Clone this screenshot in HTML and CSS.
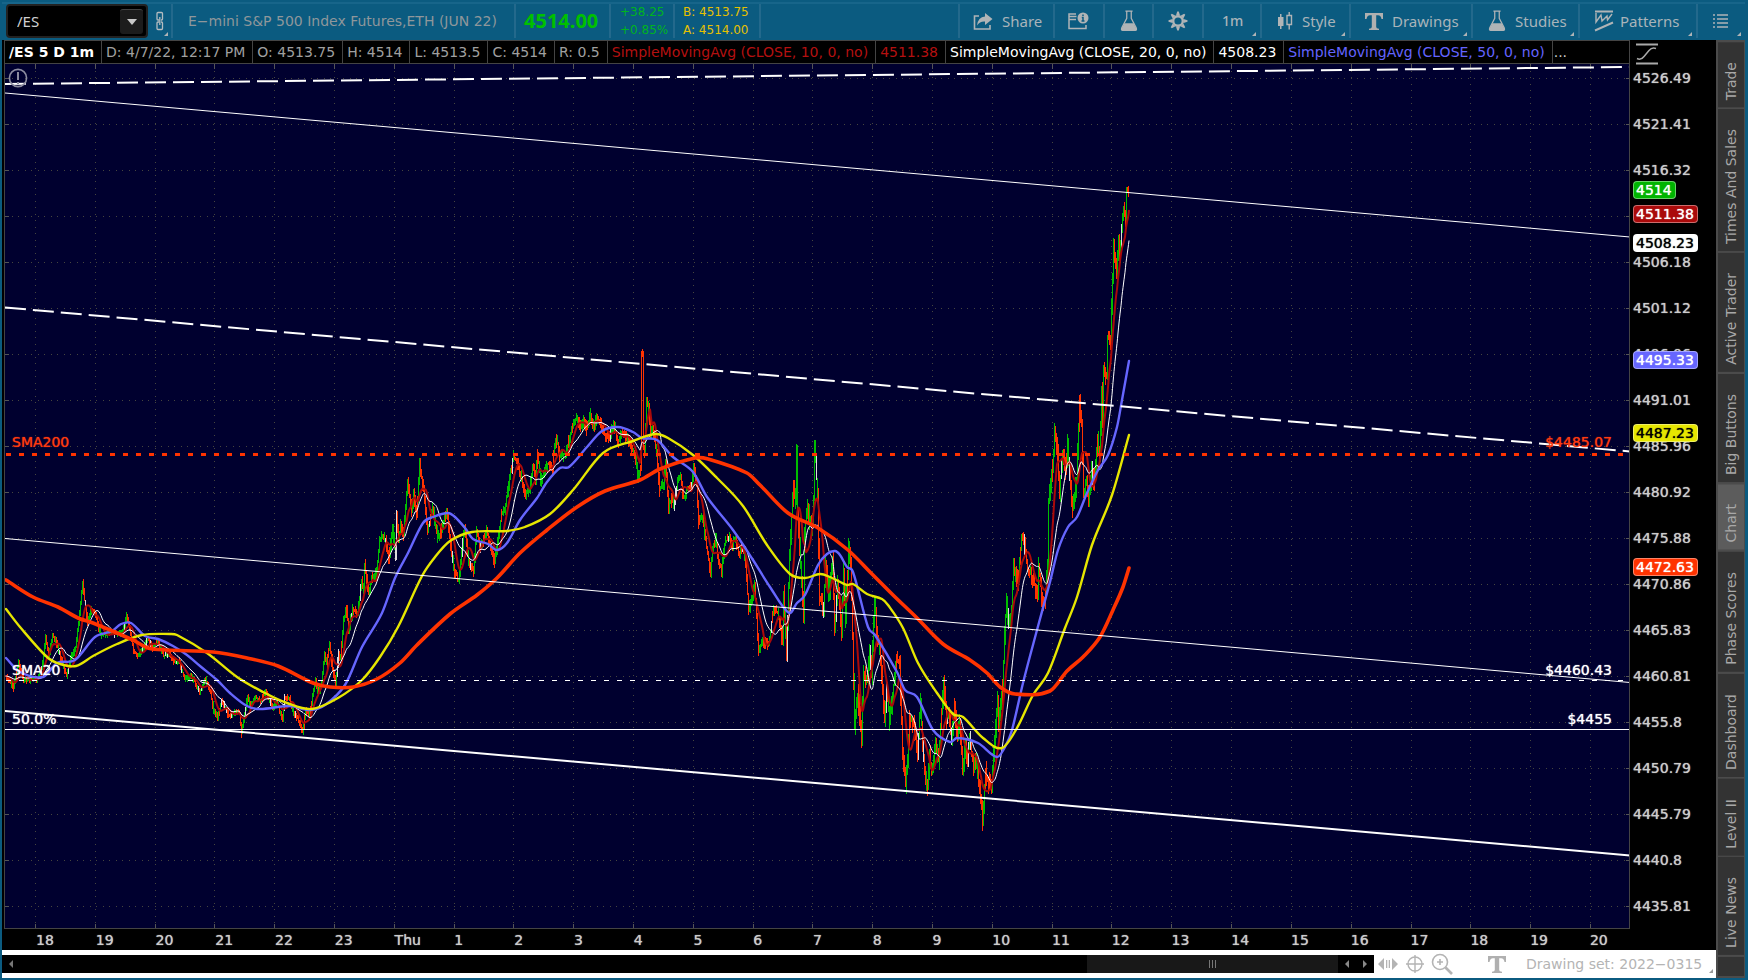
FILE: index.html
```html
<!DOCTYPE html>
<html lang="en">
<head>
<meta charset="utf-8">
<title>/ES chart</title>
<link rel="stylesheet" href="styles.css">
</head>
<body>
<header class="toolbar">
  <div class="cell symbol-cell">
    <div class="combo">
      <input class="combo-input" type="text" value="/ES" aria-label="Symbol">
      <button class="combo-btn" aria-label="Choose symbol"><svg width="12" height="8"><path d="M1 1h10L6 7z" fill="#c8c8c8"/></svg></button>
    </div>
    <button class="link-btn corner" aria-label="Link symbol"><svg width="10" height="20" viewBox="0 0 10 20" fill="none" stroke="#b4bcc0" stroke-width="1.3"><path d="M2 8V2.500q0-1 1-1h3.500q1 0 1 1V8q0 1-1 1H6M4 9H3q-1 0-1-1M2 12v5.500q0 1 1 1h3.500q1 0 1-1V12q0-1-1-1H6M4 11H3q-1 0-1 1"/><path d="M4.800 6v8"/></svg></button>
  </div>
  <div class="cell title">E−mini S&amp;P 500 Index Futures,ETH (JUN 22)</div>
  <div class="cell last">4514.00</div>
  <div class="cell pair change"><span>+38.25</span><span>+0.85%</span></div>
  <div class="cell pair quote"><span>B: 4513.75</span><span>A: 4514.00</span></div>
  <div class="spacer"></div>
  <button class="cell tool share"><svg width="20" height="19" viewBox="0 0 20 19"><path d="M6 4H1.500v13H17v-4" fill="none" stroke="#b0b4b6" stroke-width="1.600"/><path d="M12 1l7.500 6L12 13V9.500Q7 9 4 13.500 5 5 12 4.500z" fill="#b0b4b6"/></svg>Share</button>
  <button class="cell tool info" aria-label="Info"><svg width="21" height="18" viewBox="0 0 21 18"><path d="M8.500 4.500H1V16.500H18V13M1 4.500V2H8M1 7.500H8" fill="none" stroke="#b0b4b6" stroke-width="1.500"/><circle cx="15" cy="6" r="5.500" fill="#b0b4b6"/><path d="M15 2.500v1.500M13.800 5.500H15V9M13.500 9h3" stroke="#0b5b80" stroke-width="1.500" fill="none"/></svg></button>
  <button class="cell tool lab" aria-label="Lab"><svg width="18" height="22" viewBox="0 0 20 24"><use href="#flask"/></svg></button>
  <button class="cell tool gear" aria-label="Settings"><svg width="20" height="20" viewBox="-10 -10 20 20"><circle r="4.800" fill="none" stroke="#b0b4b6" stroke-width="2.400"/><g fill="#b0b4b6"><path id="tooth" d="M-2-5.500L-.8-9.500H.8L2-5.500z"/><use href="#tooth" transform="rotate(45)"/><use href="#tooth" transform="rotate(90)"/><use href="#tooth" transform="rotate(135)"/><use href="#tooth" transform="rotate(180)"/><use href="#tooth" transform="rotate(225)"/><use href="#tooth" transform="rotate(270)"/><use href="#tooth" transform="rotate(315)"/></g></svg></button>
  <button class="cell tool corner interval">1m</button>
  <button class="cell tool corner style"><svg width="16" height="20" viewBox="0 0 16 20"><path d="M1 6h5.500v9H1zM3 3h1.500v15H3z" fill="#b0b4b6"/><path d="M10 4.500h4.500v9H10zM12.200 1v3.500M12.200 13.500v5" fill="none" stroke="#b0b4b6" stroke-width="1.400"/></svg>Style</button>
  <button class="cell tool corner drawings"><svg width="18" height="19" viewBox="0 0 18 19"><use href="#tee"/></svg>Drawings</button>
  <button class="cell tool corner studies"><svg width="18" height="22" viewBox="0 0 20 24"><use href="#flask"/></svg>Studies</button>
  <button class="cell tool corner patterns"><svg width="20" height="22" viewBox="0 0 20 22" fill="none" stroke="#b0b4b6" stroke-width="1.400"><path d="M1 1.500h18" stroke-width="2"/><path d="M2 3v9l5-7 1 6 5-5 .5 4 4.500-6"/><path d="M1 20.500L19 12.500" stroke-width="2"/></svg>Patterns</button>
  <button class="cell tool corner menu" aria-label="Menu"><svg width="15" height="16" viewBox="0 0 15 16"><path d="M0 2h2M4 2h11M0 6h2M4 6h11M0 10h2M4 10h11M0 14h2M4 14h11" stroke="#b0b4b6" stroke-width="1.500"/></svg></button>
</header>

<main class="work">
  <div class="left">
    <section class="chart">
      <div class="legend">
        <b class="lg strong">/ES 5 D 1m</b><span class="lg">D: 4/7/22, 12:17 PM</span><span class="lg">O: 4513.75</span><span class="lg">H: 4514</span><span class="lg">L: 4513.5</span><span class="lg">C: 4514</span><span class="lg">R: 0.5</span><span class="lg red">SimpleMovingAvg (CLOSE, 10, 0, no)</span><span class="lg red">4511.38</span><span class="lg white">SimpleMovingAvg (CLOSE, 20, 0, no)</span><span class="lg white">4508.23</span><span class="lg blue">SimpleMovingAvg (CLOSE, 50, 0, no)</span><span class="more">...</span>
      </div>
      <div class="axis-head"><svg width="22" height="22" viewBox="0 0 22 22" fill="none" stroke="#aaa"><path d="M0 1.500h22M0 20.500h22" stroke-width="2.200"/><path d="M1 15.500q4 2 7-2l5-6q3-3.500 7-2" stroke-width="1.500"/></svg></div>
      <div class="plot">
        <svg class="canvas" id="canvas" viewBox="4 64 1626 865" preserveAspectRatio="none"></svg>
        <svg class="alert" width="20" height="20" viewBox="0 0 20 20" fill="none" stroke="#8c8ca0" stroke-width="1.600"><circle cx="10" cy="10" r="8.600"/><path d="M10 4v8M10 14v2" stroke-width="2"/></svg>
        <span class="note sma200">SMA200</span><span class="note right sma200">$4485.07</span>
        <span class="note sma20">SMA20</span><span class="note right sma20">$4460.43</span>
        <span class="note half">50.0%</span><span class="note right half">$4455</span>
      </div>
      <div class="yaxis" id="yaxis">
        <span class="tag up">4514</span><span class="tag ma10">4511.38</span><span class="tag ma20">4508.23</span><span class="tag ma50">4495.33</span><span class="tag ma100">4487.23</span><span class="tag ma200">4472.63</span>
      </div>
      <div class="xaxis" id="xaxis"></div>
    </section>
    <footer class="bottom">
      <div class="scroll">
        <button class="sbtn" aria-label="Scroll to start"><svg width="6" height="10"><path d="M5 1v8L1 5z" fill="#777"/></svg></button>
        <div class="track"><div class="thumb"><i></i><i></i><i></i></div></div>
        <button class="sbtn" aria-label="Scroll left"><svg width="6" height="10"><path d="M5 1v8L1 5z" fill="#888"/></svg></button>
        <button class="sbtn" aria-label="Scroll right"><svg width="6" height="10"><path d="M1 1v8l4-4z" fill="#888"/></svg></button>
      </div>
      <button class="bicon" aria-label="Pan"><svg width="20" height="16" viewBox="0 0 20 16" fill="#b4b4b4"><path d="M6 2v12L0 8zM14 2v12l6-6zM8 4h1.300v8H8zM10.700 4H12v8h-1.300z"/></svg></button>
      <button class="bicon" aria-label="Crosshair"><svg width="18" height="18" viewBox="0 0 18 18" fill="none" stroke="#b4b4b4" stroke-width="1.400"><circle cx="9" cy="9" r="7"/><path d="M9 0v18M0 9h18"/></svg></button>
      <button class="bicon" aria-label="Zoom"><svg width="22" height="22" viewBox="0 0 22 22" fill="none" stroke="#b4b4b4" stroke-width="1.600"><circle cx="9" cy="9" r="7.500"/><path d="M9 6v6M6 9h6"/><path d="M14.500 14.500L21 21" stroke-width="2.600"/></svg></button>
      <button class="bicon tee" aria-label="Text"><svg width="18" height="19" viewBox="0 0 18 19"><use href="#tee"/></svg></button>
      <button class="set corner">Drawing set: 2022−0315</button>
    </footer>
  </div>
  <nav class="tabs">
    <button class="tab">Trade</button><button class="tab">Times And Sales</button><button class="tab">Active Trader</button><button class="tab">Big Buttons</button><button class="tab active">Chart</button><button class="tab">Phase Scores</button><button class="tab">Dashboard</button><button class="tab">Level II</button><button class="tab">Live News</button><div class="tab rest"></div>
  </nav>
</main>
<svg width="0" height="0" class="defs"><defs>
  <g id="flask"><path d="M6 1h8M7.500 1.500V9L2 19.500Q1 22.500 3 22.500h14q2 0 1-3L12.500 9V1.500" fill="none" stroke="#b0b4b6" stroke-width="1.400"/><path d="M5 14.500h10l3.500 6q0 2-1.500 2H3q-1.500 0-1.500-2z" fill="#b0b4b6"/></g>
  <path id="tee" d="M0 1h18v6h-1.500Q16 3.500 13 3.300h-1.800V15q0 1.500 2.800 1.800V18H4v-1.200Q6.800 16.500 6.800 15V3.300H5Q2 3.500 1.500 7H0z" fill="#b0b0b0"/>
</defs></svg>
<script src="chart.js"></script>
</body>
</html>
```
FILE: styles.css
```css
* { box-sizing: border-box; }
body {
  margin: 0; height: 100vh; display: flex; flex-direction: column;
  padding: 0 3px 2px 2px; background: #0b5b80; overflow: hidden;
  font: 14px/20px "DejaVu Sans", Verdana, sans-serif; color: #a0a0a0;
}
button, input { font: inherit; color: inherit; border: 0; background: none; padding: 0; margin: 0; }
svg { display: block; flex: none; }
.defs { position: absolute; }

.toolbar { flex: none; height: 40px; display: flex; padding: 4px 0 2px; background: linear-gradient(#0b5b80 2px, #17658a 2px, #17658a 4px, #0b5b80 4px); }
.cell { display: flex; align-items: center; border-right: 2px solid #23698c; white-space: nowrap; }
.symbol-cell { width: 171px; padding-left: 4px; gap: 2px; }
.combo { display: flex; align-items: center; width: 142px; height: 34px; padding: 0 3px 0 9px; background: #000; border: 2px solid #222; border-radius: 4px; }
.combo-input { flex: 1; min-width: 0; color: #d0d0d0; font: 15px/20px "Noto Sans", sans-serif; }
.combo-btn { width: 23px; height: 25px; background: #1c1c1c; border-top: 1px solid #444; border-radius: 3px; display: grid; place-items: center; }
.link-btn { padding: 0 5px; height: 34px; display: flex; align-items: center; }
.corner { position: relative; }
.corner::after { content: ""; position: absolute; right: 4px; bottom: 2px; border: 2px solid transparent; border-right-color: #b0b4b6; border-bottom-color: #b0b4b6; }
.link-btn.corner::after { right: 2px; }
.title { padding-left: 15px; width: 343px; color: #8f979b; }
.last { width: 95px; padding-left: 8px; font: 700 20px/24px "Noto Sans", sans-serif; color: #00c000; }
.pair { flex-direction: column; align-items: flex-start; justify-content: center; font-size: 12px; line-height: 18px; }
.change { width: 64px; padding-left: 9px; color: #00b41e; }
.quote { width: 86px; padding-left: 8px; color: #e6c000; }
.spacer { flex: 1; border-right: 2px solid #23698c; }
.tool { color: #a9b4ba; gap: 9px; font: 15px/20px "Noto Sans", sans-serif; }
.share { width: 95px; padding-left: 13px; }
.info { width: 50px; padding-left: 13px; }
.lab { width: 49px; padding-left: 15px; }
.gear { width: 50px; padding-left: 14px; }
.interval { width: 58px; padding-left: 18px; font-size: 14px; font-weight: 500; }
.style { width: 89px; padding-left: 15px; }
.drawings { width: 122px; padding-left: 14px; }
.studies { width: 107px; padding-left: 15px; }
.patterns { width: 118px; padding-left: 14px; gap: 6px; }
.menu { width: 47px; padding-left: 15px; border-right: 0; }

.work { flex: 1; min-height: 0; display: flex; }
.left { flex: 1; min-width: 0; display: flex; flex-direction: column; background: #fff; }
.chart { flex: 1; min-height: 0; display: grid; grid-template: 24px minmax(0, 1fr) 21px / minmax(0, 1fr) 86px; background: #000; padding-left: 2px; }
.legend { display: flex; overflow: hidden; border: 1px solid #444; white-space: nowrap; line-height: 22px; }
.lg { padding: 0 7px 0 4px; border-right: 1px solid #444; }
.strong { color: #fff; }
.red { color: #b41010; }
.white { color: #fff; }
.blue { color: #6464ff; }
.more { padding-left: 1px; color: #ccc; }
.axis-head { padding: 3px 0 0 6px; }

.plot { position: relative; background: #00002f; }
.canvas { width: 100%; height: 100%; }
.alert { position: absolute; left: 4px; top: 4px; }
.note { position: absolute; left: 8px; margin-top: -9px; color: #fff; line-height: 18px; text-shadow: 0 0 1px currentColor; }
.note.right { left: auto; right: 18px; }
.note.sma200 { top: 43.7%; color: #ff3a10; }
.note.sma20 { top: 70%; }
.note.half { top: 75.7%; }

.yaxis { position: relative; display: flex; flex-direction: column; margin: -9px 0 0; color: #ccc; text-shadow: 0 0 1px currentColor; }
.ylabel { flex: 1; display: flex; align-items: center; padding-left: 3px; }
.tag { position: absolute; left: 3px; margin-top: -9px; padding: 0 3px 0 2px; border-radius: 4px; border: 1px solid #ffffff66; color: #fff; line-height: 16px; }
.up { top: 15.5%; background: #00b400; }
.ma10 { top: 18.2%; background: #aa0a0a; }
.ma20 { top: 21.5%; background: #fff; color: #000; }
.ma50 { top: 34.9%; background: #6666ff; }
.ma100 { top: 43.3%; background: #e6e600; color: #000; }
.ma200 { top: 58.6%; background: #ff3300; }
.xaxis { display: flex; padding-left: 32px; color: #ccc; text-shadow: 0 0 1px currentColor; }
.xlabel { flex: 0 0 3.75%; white-space: nowrap; line-height: 22px; }

.bottom { flex: none; height: 28px; display: flex; align-items: center; color: #b4b4b4; }
.scroll { flex: 1; height: 18px; display: flex; align-items: center; background: #000; padding-left: 5px; }
.sbtn { width: 18px; display: grid; place-items: center; }
.scroll .sbtn:first-child { width: 8px; }
.track { flex: 1; height: 18px; }
.thumb { width: 19%; height: 18px; margin-left: auto; background: #181818; display: flex; align-items: center; justify-content: center; gap: 2px; }
.thumb i { width: 1px; height: 8px; background: #777; }
.bicon { width: 27px; height: 24px; display: grid; place-items: center; }
.bicon.tee { width: 71px; padding-left: 12px; }
.set { width: 190px; height: 28px; text-align: left; white-space: nowrap; }
.set.corner::after { right: 3px; bottom: 5px; border-right-color: #999; border-bottom-color: #999; }

.tabs { flex: none; width: 29px; background: #4b4b4b; display: flex; flex-direction: column; gap: 2px; padding: 2px 1px 2px 2px; overflow: hidden; }
.tab { flex: none; width: 26px; padding: 7px 0 20px; background: #333; color: #a8a8a8; writing-mode: vertical-rl; transform: rotate(180deg); line-height: 26px; text-align: center; white-space: nowrap; }
.tab.active { background: #5c5c5c; }
.tab.rest { flex: 1; padding: 0; }
```
FILE: chart.js
```js
const NS = "http://www.w3.org/2000/svg";
const canvas = document.getElementById("canvas");
function add(tag, attrs) {
  const el = document.createElementNS(NS, tag);
  for (const k in attrs) el.setAttribute(k, attrs[k]);
  canvas.appendChild(el);
}
function line(x1, y1, x2, y2, stroke, width, dash, extra) {
  add("line", Object.assign({ x1, y1, x2, y2, stroke, "stroke-width": width, "stroke-dasharray": dash || "none" }, extra));
}

// Axes; the row behind the 4511.38 tag carries no label
const prices = ["4526.49","4521.41","4516.32","","4506.18","4501.12","4496.06","4491.01","4485.96","4480.92","4475.88","4470.86","4465.83","4460.81","4455.8","4450.79","4445.79","4440.8","4435.81"];
const hours = ["18","19","20","21","22","23","Thu"];
for (let h = 1; h <= 20; h++) hours.push(String(h));
const yaxis = document.getElementById("yaxis");
const firstTag = yaxis.firstElementChild;
prices.forEach(p => {
  const s = document.createElement("span");
  s.className = "ylabel"; s.textContent = p;
  yaxis.insertBefore(s, firstTag);
});
hours.forEach(h => {
  const s = document.createElement("span");
  s.className = "xlabel"; s.textContent = h;
  document.getElementById("xaxis").appendChild(s);
});
const crisp = { "shape-rendering": "crispEdges" };
prices.forEach((p, i) => {
  const y = 78.5 + i * 46;
  line(5, y, 1630, y, "#45453f", 1, "1 5.5", crisp);
  line(4, y, 9, y, "#555", 1, "", crisp);
  line(1626, y, 1630, y, "#555", 1, "", crisp);
});
hours.forEach((h, i) => {
  const x = Math.floor(35.4 + i * 59.81) + 0.5;
  line(x, 64, x, 929, "#45453f", 1, "1 5.5", crisp);
  line(x, 64, x, 69, "#555", 1, "", crisp);
  line(x, 924, x, 929, "#555", 1, "", crisp);
});

// Turning points of the one-minute price series
const turns = [[5,675],[13,687],[18,662],[23,680],[37,678],[42,663],[45,637],[48,655],[52,635],[55,640],[62,663],[66,676],[70,657],[75,647],[79,613],[82,582],[84,600],[87,622],[91,608],[95,615],[100,635],[107,633],[115,633],[122,632],[126,615],[129,627],[133,650],[137,655],[143,647],[147,638],[152,647],[157,640],[163,655],[168,653],[174,662],[178,660],[184,678],[190,675],[195,683],[199,692],[205,678],[210,693],[213,710],[217,717],[221,700],[227,713],[230,716],[235,710],[239,713],[241,733],[243,720],[247,695],[249,705],[255,697],[260,700],[265,690],[272,707],[276,700],[282,720],[284,697],[289,698],[292,710],[297,718],[302,731],[305,710],[309,715],[313,690],[315,680],[318,693],[321,683],[324,653],[326,663],[329,643],[332,667],[335,681],[338,653],[340,657],[343,620],[346,609],[348,628],[352,609],[357,613],[361,580],[363,588],[364,563],[368,593],[371,577],[376,572],[379,540],[382,535],[385,540],[388,558],[392,529],[395,555],[396,513],[398,540],[400,523],[403,533],[407,480],[411,510],[413,493],[416,513],[419,463],[421,477],[423,490],[427,531],[432,507],[437,536],[440,531],[446,510],[450,543],[453,568],[458,580],[461,550],[464,527],[468,561],[473,570],[476,530],[480,547],[486,529],[489,543],[494,561],[497,543],[501,513],[504,510],[508,483],[513,455],[517,463],[521,480],[525,493],[529,490],[532,465],[535,477],[537,453],[540,480],[547,463],[552,470],[553,452],[556,437],[559,455],[565,453],[568,440],[573,420],[577,418],[580,427],[583,420],[586,428],[590,413],[592,427],[596,417],[600,423],[605,435],[609,436],[613,422],[617,442],[622,432],[627,437],[632,450],[635,457],[637,476],[640,467],[641,351],[642,356],[643,445],[644,450],[646,397],[648,407],[650,433],[652,427],[656,453],[659,490],[663,483],[665,463],[668,506],[671,497],[673,506],[677,480],[680,477],[683,498],[687,487],[691,487],[693,465],[696,483],[698,521],[702,517],[705,540],[710,571],[712,547],[715,537],[718,560],[721,570],[724,543],[728,537],[732,543],[735,537],[738,553],[742,547],[745,563],[748,608],[752,597],[754,583],[758,651],[762,640],[768,645],[773,607],[777,613],[782,637],[783,593],[786,651],[789,557],[791,517],[793,485],[795,497],[796,452],[797,512],[800,563],[803,615],[804,530],[807,505],[811,530],[813,500],[814,443],[817,497],[819,597],[823,607],[825,563],[828,597],[832,557],[834,630],[837,583],[841,631],[843,570],[845,617],[848,547],[850,563],[852,633],[854,725],[857,693],[861,735],[863,673],[867,677],[869,650],[871,673],[874,600],[877,640],[879,647],[882,687],[884,718],[886,687],[889,721],[892,693],[896,660],[899,663],[902,753],[905,781],[907,757],[909,715],[913,723],[917,750],[920,702],[923,760],[927,788],[929,753],[931,771],[935,743],[938,757],[943,682],[946,720],[948,713],[951,737],[954,703],[957,740],[959,720],[962,767],[965,747],[967,760],[969,737],[973,768],[975,757],[978,783],[981,800],[982,821],[985,770],[987,780],[991,785],[993,753],[997,700],[998,720],[1000,700],[1002,687],[1004,633],[1006,600],[1008,627],[1011,607],[1013,562],[1017,583],[1021,537],[1023,537],[1027,567],[1032,577],[1037,593],[1038,563],[1041,597],[1044,600],[1047,567],[1048,500],[1052,467],[1054,432],[1057,453],[1059,490],[1062,452],[1065,467],[1067,443],[1069,473],[1072,508],[1076,477],[1079,402],[1081,420],[1083,493],[1086,480],[1088,503],[1091,467],[1093,487],[1097,437],[1099,460],[1101,390],[1102,417],[1103,370],[1106,377],[1107,337],[1110,340],[1111,303],[1113,243],[1116,273],[1118,237],[1119,260],[1121,227],[1123,207],[1125,223],[1126,187],[1128,195],[1129,192]];
function priceAt(x) {
  if (x <= turns[0][0]) return turns[0][1];
  for (let i = 1; i < turns.length; i++) {
    const [x1, y1] = turns[i], [x0, y0] = turns[i - 1];
    if (x <= x1) return y0 + (y1 - y0) * (x - x0) / (x1 - x0);
  }
  return turns[turns.length - 1][1];
}
let seed = 7;
function rand() { seed = (seed * 16807) % 2147483647; return seed / 2147483647; }
const bars = { "#00be00": "", "#ff3300": "", "#dcdcdc": "" };
for (let x = 6; x <= 1128; x++) {
  const a = priceAt(x - 1), b = priceAt(x);
  const vol = x > 780 && x < 1115 ? 24 : x > 330 ? 14 : 8;
  const top = Math.min(a, b) - rand() * vol * 0.4;
  const bot = Math.max(a, b) + 1 + rand() * vol * 0.5;
  let up = b < a;
  if (rand() < 0.15) up = !up;
  const color = rand() < 0.05 ? "#dcdcdc" : up ? "#00be00" : "#ff3300";
  bars[color] += `M${x + 0.5} ${Math.round(top)}V${Math.round(bot)}`;
}
for (const c in bars) add("path", { d: bars[c], stroke: c, "stroke-width": 1, fill: "none", "shape-rendering": "crispEdges" });

// Moving averages
function average(n) {
  const out = [];
  for (let x = 6; x <= 1129; x++) {
    let s = 0;
    for (let k = 0; k < n; k++) s += priceAt(x - k);
    out.push([x, s / n + 1]);
  }
  return out;
}
function curve(p, stroke, width) {
  let d = `M${p[0][0]} ${p[0][1]}`;
  for (let i = 0; i < p.length - 1; i++) {
    const a = p[Math.max(i - 1, 0)], b = p[i], c = p[i + 1], e = p[Math.min(i + 2, p.length - 1)];
    const third = (c[0] - b[0]) / 3;
    const mb = i ? (c[1] - a[1]) / (c[0] - a[0]) : (c[1] - b[1]) / (c[0] - b[0]);
    const mc = e !== c ? (e[1] - b[1]) / (e[0] - b[0]) : (c[1] - b[1]) / (c[0] - b[0]);
    d += `C${b[0] + third} ${b[1] + mb * third} ${c[0] - third} ${c[1] - mc * third} ${c[0]} ${c[1]}`;
  }
  add("path", { d, fill: "none", stroke, "stroke-width": width, "stroke-linejoin": "round", "stroke-linecap": "round" });
}
curve(average(10), "#aa0a0a", 2);
curve(average(20), "#ffffff", 1);
const ma50 = [[6,658],[20,672],[43,677],[57,663],[75,660],[95,637],[112,631],[121,624],[131,623],[145,636],[158,639],[173,646],[187,655],[200,666],[217,680],[230,693],[247,706],[260,709],[290,706],[310,710],[325,705],[345,685],[362,647],[382,613],[395,578],[408,553],[423,523],[433,517],[448,513],[455,517],[465,528],[473,539],[488,544],[497,550],[507,543],[520,520],[537,498],[547,482],[560,468],[569,467],[587,447],[602,431],[618,427],[633,432],[642,438],[657,440],[673,457],[693,472],[707,497],[733,530],[753,560],[770,587],[789,613],[797,603],[805,595],[818,565],[827,554],[835,551],[840,555],[847,567],[853,572],[868,627],[875,635],[897,672],[905,690],[917,697],[933,730],[950,742],[957,738],[978,743],[997,757],[1005,747],[1012,730],[1023,683],[1037,630],[1050,582],[1058,550],[1068,527],[1077,517],[1087,493],[1098,470],[1108,455],[1117,427],[1122,400],[1129,361]];
const ma100 = [[6,609],[20,627],[47,657],[60,664],[76,666],[93,656],[117,644],[142,635],[170,634],[177,635],[207,653],[237,677],[263,692],[287,703],[312,709],[338,698],[362,680],[380,657],[398,627],[422,576],[435,557],[450,541],[472,532],[507,531],[525,527],[550,514],[573,490],[603,453],[633,441],[655,434],[668,438],[693,455],[717,478],[743,506],[767,545],[790,574],[805,578],[820,574],[830,577],[847,585],[853,584],[867,594],[882,599],[888,605],[903,628],[918,663],[937,693],[953,714],[963,717],[983,738],[1002,748],[1017,728],[1033,695],[1048,673],[1065,628],[1077,597],[1092,545],[1112,495],[1129,435]];
const ma200 = [[6,580],[33,597],[58,607],[78,618],[93,623],[133,640],[148,648],[167,650],[213,652],[247,658],[278,666],[313,683],[330,687],[353,687],[377,679],[400,663],[417,645],[450,614],[477,595],[497,578],[520,553],[547,530],[577,507],[605,491],[640,480],[660,469],[695,458],[708,459],[747,473],[760,485],[788,513],[818,528],[848,550],[872,574],[893,595],[917,618],[943,644],[970,660],[987,673],[1000,687],[1015,694],[1050,691],[1067,671],[1083,657],[1100,637],[1113,610],[1123,587],[1129,568]];
curve(ma50, "#6666ff", 2.4);
curve(ma100, "#e6e600", 2.4);
curve(ma200, "#ff3300", 3.6);

// Drawings
line(5, 84, 1630, 67, "#fff", 2, "21 7");
line(5, 93, 1630, 237, "#fff", 1);
line(5, 307.5, 1630, 451.5, "#fff", 2, "21 7");
line(5, 538.5, 1630, 682.5, "#fff", 1);
line(5, 711, 1630, 855.5, "#fff", 2);
line(6, 454.5, 1630, 454.5, "#ff3300", 3, "5 8", crisp);
line(6, 680.5, 1630, 680.5, "#fff", 1, "5 8", crisp);
line(5, 729.5, 1630, 729.5, "#fff", 1, "", crisp);

// Frame
line(4.5, 64, 4.5, 929, "#444", 1, "", crisp);
line(1629.5, 64, 1629.5, 929, "#444", 1, "", crisp);
line(4, 928.5, 1630, 928.5, "#444", 1, "", crisp);
```
